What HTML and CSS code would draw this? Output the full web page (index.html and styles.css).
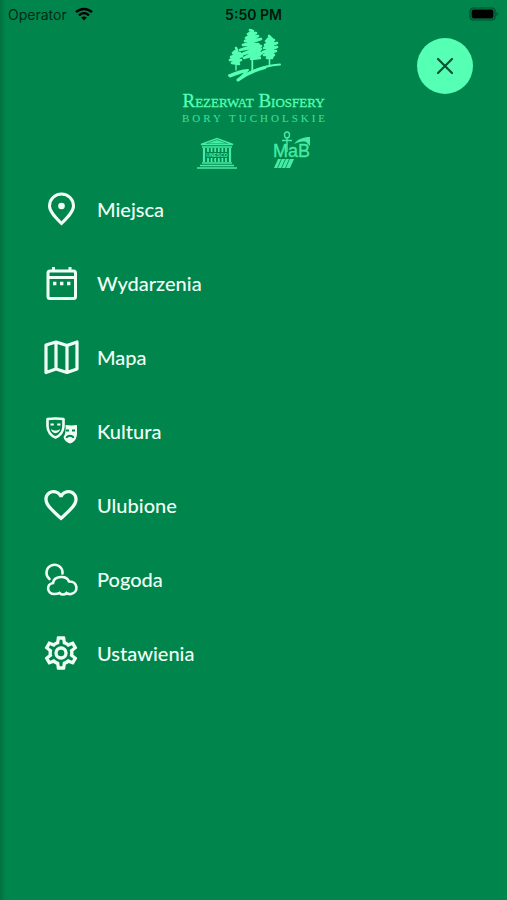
FILE: index.html
```
<!DOCTYPE html>
<html lang="pl">
<head>
    <meta charset="UTF-8">
    <meta name="viewport" content="width=device-width, initial-scale=1.0">
    <title>Rezerwat Biosfery Bory Tucholskie</title>
    <link rel="stylesheet" href="styles.css">
</head>
<body>
    <div class="status">
        <div class="operator">
            <span>Operator</span>
            <svg width="18" height="14" viewBox="0 0 18 14" fill="none" stroke="currentColor" stroke-width="2.4">
                <path d="M1 5.2C5.6 .9 12.4 .9 17 5.2"/>
                <path d="M4 8.3C6.900 5.600 11.100 5.600 14 8.300"/>
                <path d="M6.200 10.600C7.800 9.100 10.200 9.100 11.800 10.600L9 13.600z" fill="currentColor" stroke="none"/>
            </svg>
        </div>
        <div class="time">5:50 PM</div>
        <svg class="battery" width="30" height="14" viewBox="0 0 30 14">
            <rect x="1" y="1" width="25" height="12" rx="3.5" fill="none" stroke="#004c2b" stroke-width="1.2"/>
            <rect x="2.6" y="2.6" width="21.8" height="8.8" rx="2" fill="#000"/>
            <path d="M27.500 5v4c1.800-.7 1.800-3.300 0-4z" fill="#004c2b"/>
        </svg>
    </div>

    <header class="header">
        <div class="logo">
            <svg class="trees" width="54" height="56" viewBox="0 0 54 56" fill="none" stroke="currentColor" stroke-linejoin="round" stroke-linecap="round">
                <!-- środkowe drzewo -->
                <path d="M23 2l3 1-5 3 8-1-10 5 12-2-13 5 16-2-18 6 15-1-18 6 21-4-21 9 21-6-17 9 18-5-11 6 9-1" stroke-width="2.600"/>
                <path d="M25 8l1 20M31 17l1 10" stroke-width="4"/>
                <path d="M25.300 28v16" stroke-width="1.800"/>
                <!-- prawe drzewo -->
                <path d="M42 8l2 2-5 3 8-1-9 5 12-2-13 5 13-1-14 5 13-1-12 4 10 0-7 3 5 0" stroke-width="2.600"/>
                <path d="M43 13l0 14" stroke-width="8"/>
                <path d="M42.500 27v10" stroke-width="1.600"/>
                <!-- lewe drzewo -->
                <path d="M9 20l1 2-4 3 7 0-9 4 11-1-12 4 11 0-9 3 7 1" stroke-width="2.600"/>
                <path d="M9 25l1 8" stroke-width="6"/>
                <path d="M9 34v8" stroke-width="1.400"/>
                <path d="M2 47.500C8 44.500 14 42.500 21 42L3 48.500M21 42L11 52C22 43 36 38 53 36.500" stroke-width="2"/>
                <path d="M11 52C19 46 29 42 38 39.500" stroke-width="3"/>
            </svg>
            <div class="name">Rezerwat Biosfery</div>
            <div class="region">BORY TUCHOLSKIE</div>
            <div class="marks">
                <svg width="40" height="32" viewBox="0 0 40 32" fill="none" stroke="currentColor">
                    <path d="M4 7.500L20 1.500l16 6z" stroke-width="1.500"/>
                    <path d="M10 6.500L20 3l10 3.500z" fill="currentColor" stroke="none"/>
                    <path d="M5 10h30" stroke-width="1.500"/>
                    <path d="M7 11v14M33 11v14" stroke-width="2.200"/>
                    <path d="M11 11v4M14.600 11v4M18.200 11v4M21.800 11v4M25.400 11v4M29 11v4M11 21v4M14.600 21v4M18.200 21v4M21.800 21v4M25.400 21v4M29 21v4" stroke-width="1.800"/>
                    <text class="unesco" x="20" y="20" text-anchor="middle" fill="currentColor" stroke="none">UNESCO</text>
                    <path d="M5 26h30M3 28.500h34M0 31h40" stroke-width="1.600"/>
                </svg>
                <svg width="38" height="38" viewBox="0 0 38 38" fill="none" stroke="currentColor">
                    <ellipse cx="14" cy="4" rx="2.500" ry="3" stroke-width="1.400"/>
                    <path d="M14 7v14M9 9.500h10" stroke-width="1.400"/>
                    <path d="M21 13C25 8 30 6 37 6v9l-4-4c-4-1-7 0-12 2z" fill="currentColor" stroke="none"/>
                    <text class="mab" x="0" y="26" fill="currentColor" stroke="currentColor" stroke-width=".3">MaB</text>
                    <path d="M5 28h16l-4 9H1z" fill="currentColor" stroke="none"/>
                    <path d="M8.500 28l-4 9M12.500 28l-4 9M16.500 28l-4 9" stroke="#00864c" stroke-width=".8"/>
                </svg>
            </div>
        </div>
        <button class="close" type="button" aria-label="Zamknij">
            <svg width="18" height="18" viewBox="0 0 18 18" fill="none" stroke="currentColor" stroke-width="2.200" stroke-linecap="round">
                <path d="M2 2l14 14M16 2L2 16"/>
            </svg>
        </button>
    </header>

    <nav class="menu">
        <a href="#miejsca">
            <svg viewBox="0 0 40 40" fill="none" stroke="currentColor" stroke-width="3">
                <path d="M20.500 34.500C13 27 8.500 22 8.500 17a12 12 0 0 1 24 0c0 5-4.500 10-12 17.500z"/>
                <circle cx="20.500" cy="17" r="3.300" fill="currentColor" stroke="none"/>
            </svg>
            <span>Miejsca</span>
        </a>
        <a href="#wydarzenia">
            <svg viewBox="0 0 40 40" fill="none" stroke="currentColor" stroke-width="3">
                <rect x="7" y="8" width="27.500" height="27.500" rx="2"/>
                <path d="M7 14.500h27.500M12.500 4v4.500M29 4v4.500"/>
                <path d="M12 20.500h3.400M19 20.500h3.400M26 20.500h3.400" stroke-width="3.400"/>
            </svg>
            <span>Wydarzenia</span>
        </a>
        <a href="#mapa">
            <svg viewBox="0 0 40 40" fill="none" stroke="currentColor" stroke-width="3.200" stroke-linejoin="round">
                <path d="M5 8l10-3 11 3.500L36 5v27l-10 3.500L15 32 5 35.500zM15 5v27M26 8.500v27"/>
            </svg>
            <span>Mapa</span>
        </a>
        <a href="#kultura">
            <svg viewBox="0 0 40 40" fill="none" stroke="currentColor">
                <path d="M6.500 8c5-.6 11-.6 16 0v7c0 6-4 10-8 11.500-4-1.500-8-5.500-8-11.500z" stroke-width="2.600" stroke-linejoin="round"/>
                <path d="M9.500 13.500h3.300M16.200 13.500h3.300" stroke-width="2"/>
                <path d="M10 18c2.500 2 6.500 2 9 0-.5 5.500-8.500 5.500-9 0z" fill="currentColor" stroke="none"/>
                <path d="M24.500 14c4 .6 8 .6 11.500 0v8c0 6-3 9.500-7 10.500-3.500-1-6-3.500-6.500-6.500 2-2.500 2.500-7 2-12z" fill="currentColor" stroke="none"/>
                <path d="M25 19.500h3M31 19.500h3M25.500 27c1-3 6-3 7 0" stroke="#00864c" stroke-width="1.800"/>
            </svg>
            <span>Kultura</span>
        </a>
        <a href="#ulubione">
            <svg viewBox="0 0 24 24" fill="currentColor">
                <path d="M12.100 18.550L12 18.650L11.890 18.550C7.140 14.240 4 11.390 4 8.500C4 6.500 5.500 5 7.500 5C9.040 5 10.540 6 11.070 7.360H12.930C13.460 6 14.960 5 16.500 5C18.500 5 20 6.500 20 8.500C20 11.390 16.860 14.240 12.100 18.550M16.500 3C14.760 3 13.090 3.810 12 5.080C10.910 3.810 9.240 3 7.500 3C4.420 3 2 5.410 2 8.500C2 12.270 5.400 15.360 10.550 20.030L12 21.350L13.450 20.030C18.600 15.360 22 12.270 22 8.500C22 5.410 19.580 3 16.500 3Z"/>
            </svg>
            <span>Ulubione</span>
        </a>
        <a href="#pogoda">
            <svg viewBox="0 0 40 40" fill="none" stroke="currentColor" stroke-width="2.600" stroke-linecap="round">
                <path d="M8.500 20A8 8 0 1 1 21.500 14.500"/>
                <path d="M13.500 35c-8 0-8.500-10-1.500-11 1-7.500 13.500-8 16-1.500 9-.5 10 11 2 12.500-2 .3-3.500-.2-4.500-1-2 2-5 2-7 0-1.500 1-3 1-5 1z"/>
            </svg>
            <span>Pogoda</span>
        </a>
        <a href="#ustawienia">
            <svg viewBox="0 0 24 24" fill="currentColor">
                <path d="M12,8A4,4 0 0,1 16,12A4,4 0 0,1 12,16A4,4 0 0,1 8,12A4,4 0 0,1 12,8M12,10A2,2 0 0,0 10,12A2,2 0 0,0 12,14A2,2 0 0,0 14,12A2,2 0 0,0 12,10M10,22C9.750,22 9.540,21.820 9.500,21.580L9.130,18.930C8.500,18.680 7.960,18.340 7.440,17.940L4.950,18.950C4.730,19.030 4.460,18.950 4.340,18.730L2.340,15.270C2.210,15.050 2.270,14.780 2.460,14.630L4.570,12.970L4.500,12L4.570,11L2.460,9.370C2.270,9.220 2.210,8.950 2.340,8.730L4.340,5.270C4.460,5.050 4.730,4.960 4.950,5.050L7.440,6.050C7.960,5.660 8.500,5.320 9.130,5.070L9.500,2.420C9.540,2.180 9.750,2 10,2H14C14.250,2 14.460,2.180 14.500,2.420L14.870,5.070C15.500,5.320 16.040,5.660 16.560,6.050L19.050,5.050C19.270,4.960 19.540,5.050 19.660,5.270L21.660,8.730C21.790,8.950 21.730,9.220 21.540,9.370L19.430,11L19.500,12L19.430,13L21.540,14.630C21.730,14.780 21.790,15.050 21.660,15.270L19.660,18.730C19.540,18.950 19.270,19.040 19.050,18.950L16.560,17.950C16.040,18.340 15.500,18.680 14.870,18.930L14.500,21.580C14.460,21.820 14.250,22 14,22H10M11.250,4L10.880,6.610C9.680,6.860 8.620,7.500 7.850,8.390L5.440,7.350L4.690,8.650L6.800,10.200C6.400,11.370 6.400,12.640 6.800,13.800L4.680,15.360L5.430,16.660L7.860,15.620C8.630,16.500 9.680,17.140 10.870,17.380L11.240,20H12.760L13.130,17.390C14.320,17.140 15.370,16.500 16.140,15.620L18.570,16.660L19.320,15.360L17.200,13.810C17.600,12.640 17.600,11.370 17.200,10.200L19.310,8.650L18.560,7.350L16.150,8.390C15.380,7.500 14.320,6.860 13.120,6.620L12.750,4H11.250Z"/>
            </svg>
            <span>Ustawienia</span>
        </a>
    </nav>
</body>
</html>
```
FILE: styles.css
```
* {
    box-sizing: border-box;
}
body {
    margin: 0;
    min-height: 100vh;
    background: linear-gradient(to right, #00713f, #00864c 6px);
    font-family: Lato, sans-serif;
    color: #fff;
}
.status {
    display: grid;
    grid-template-columns: 1fr auto 1fr;
    align-items: center;
    height: 28px;
    padding: 0 8px;
    font-family: Inter, sans-serif;
    font-size: 14px;
    color: #00140b;
}
.operator {
    display: flex;
    align-items: center;
    gap: 8px;
    color: #002a17;
}
.operator svg {
    color: #000;
}
.time {
    font-weight: 600;
}
.battery {
    justify-self: end;
}
.header {
    display: grid;
    grid-template-columns: 1fr auto 1fr;
    padding: 0 34px;
    color: #55ffb4;
}
.logo {
    grid-column: 2;
    display: flex;
    flex-direction: column;
    align-items: center;
}
.name {
    margin-top: 6px;
    font-family: "Liberation Serif", serif;
    font-size: 19px;
    line-height: 22px;
    font-variant: small-caps;
    -webkit-text-stroke: 0.3px currentColor;
}
.region {
    font-family: "Liberation Serif", serif;
    font-size: 11px;
    line-height: 12px;
    letter-spacing: 3px;
    margin-right: -3px;
    color: #3fe09a;
}
.marks {
    display: flex;
    align-items: flex-end;
    gap: 36px;
    margin-top: 7px;
    color: #45eca3;
}
.unesco {
    font-family: "Liberation Sans", sans-serif;
    font-size: 5px;
    font-weight: bold;
}
.mab {
    font-family: "Liberation Sans", sans-serif;
    font-size: 18px;
}
.close {
    display: flex;
    align-items: center;
    justify-content: center;
    justify-self: end;
    width: 56px;
    height: 56px;
    margin-top: 10px;
    padding: 0;
    border: none;
    border-radius: 50%;
    background-color: #55ffb4;
    color: #0a5233;
    cursor: pointer;
}
.menu {
    display: flex;
    flex-direction: column;
    gap: 34px;
    padding: 20px 41px;
}
.menu a {
    display: flex;
    align-items: center;
    gap: 16px;
    color: #f0fff6;
    font-size: 20px;
    font-weight: 500;
    line-height: 40px;
    text-decoration: none;
}
.menu svg {
    width: 40px;
    height: 40px;
}
```
